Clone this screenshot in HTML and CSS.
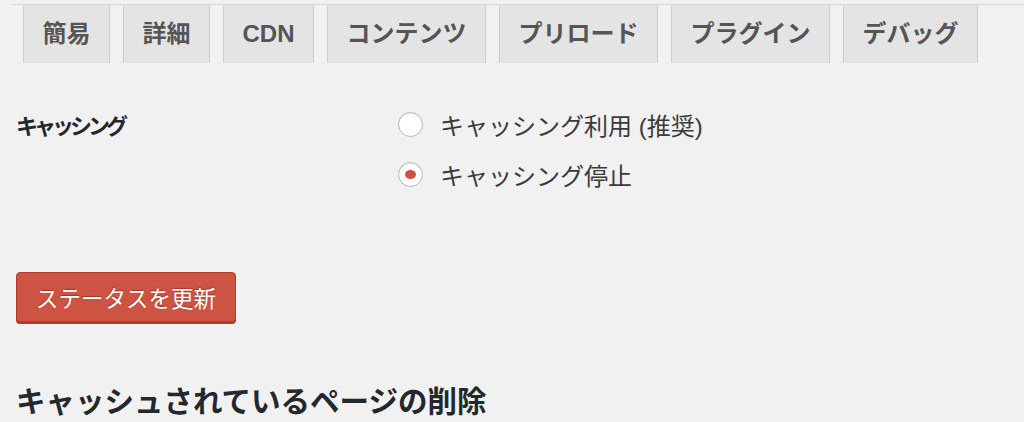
FILE: index.html
```html
<!DOCTYPE html>
<html>
  <head>
    <meta charset="UTF-8" />
    <title>キャッシュ設定</title>
    <link rel="stylesheet" href="styles.css">
  </head>
  <body>
    <div class="nav-tab-wrapper">
      <a class="nav-tab" href="#">簡易</a>
      <a class="nav-tab" href="#">詳細</a>
      <a class="nav-tab" href="#">CDN</a>
      <a class="nav-tab" href="#">コンテンツ</a>
      <a class="nav-tab" href="#">プリロード</a>
      <a class="nav-tab" href="#">プラグイン</a>
      <a class="nav-tab" href="#">デバッグ</a>
    </div>

    <form class="settings">
      <div class="form-row">
        <div class="form-label">キャッシング</div>
        <ul class="radio-list">
          <li>
            <label class="radio"><input type="radio" name="caching" value="on" />キャッシング利用 (推奨)</label>
          </li>
          <li>
            <label class="radio"><input type="radio" name="caching" value="off" checked />キャッシング停止</label>
          </li>
        </ul>
      </div>

      <div class="submit">
        <input class="button-primary" type="button" value="ステータスを更新" />
      </div>
    </form>

    <h2 class="section-title">キャッシュされているページの削除</h2>
  </body>
</html>
```

FILE: styles.css
```css
body {
  margin: 0;
  background: #f1f1f1;
  color: #444;
  font-family: "Liberation Sans", "Noto Sans CJK JP", sans-serif;
}

.nav-tab-wrapper {
  display: flex;
  gap: 13px;
  margin: 4px 0 0 12px;
  padding-left: 11px;
  border-top: 1px solid #d6d6d6;
}

.nav-tab {
  display: block;
  padding: 12px 18.5px;
  line-height: 34px;
  font-size: 24px;
  font-weight: bold;
  color: #555;
  text-decoration: none;
  background: #e4e4e4;
  border-left: 1px solid #cfcfcf;
  border-right: 1px solid #cfcfcf;
}

.settings {
  padding: 0 16px;
}

.form-row {
  display: flex;
  margin-top: 36px;
}

.form-label {
  width: 381px;
  padding-top: 3px;
  line-height: 50px;
  font-size: 22px;
  letter-spacing: -4px;
  font-weight: bold;
  color: #23282d;
}

.radio-list {
  margin: 0;
  padding: 0;
  list-style: none;
}

.radio {
  display: flex;
  align-items: center;
  gap: 17px;
  height: 50px;
  font-size: 24px;
  color: #3a3a3a;
}

.radio input {
  appearance: none;
  margin: 0 0 0 1px;
  width: 25px;
  height: 25px;
  border: 1px solid #b4b9be;
  border-radius: 50%;
  background: #fff;
  box-shadow: inset 0 1px 2px rgba(0, 0, 0, 0.1);
  display: flex;
  align-items: center;
  justify-content: center;
}

.radio input:checked::before {
  content: "";
  width: 11px;
  height: 9px;
  border-radius: 50%;
  background: #d0503f;
}

.submit {
  margin-top: 73px;
}

.button-primary {
  height: 50px;
  padding: 0 19px;
  font-family: "Liberation Sans", "Noto Sans CJK JP", sans-serif;
  font-size: 22.5px;
  color: #fff;
  background: #cd5443;
  border: 1px solid #b7392c;
  border-radius: 4px;
  box-shadow: 0 2px 0 #b13a2d;
  text-shadow: 0 -1px 1px rgba(120, 20, 10, 0.5);
}

.section-title {
  margin: 60px 16px 0;
  line-height: 40px;
  font-size: 29.5px;
  font-weight: bold;
  color: #23282d;
}
```
